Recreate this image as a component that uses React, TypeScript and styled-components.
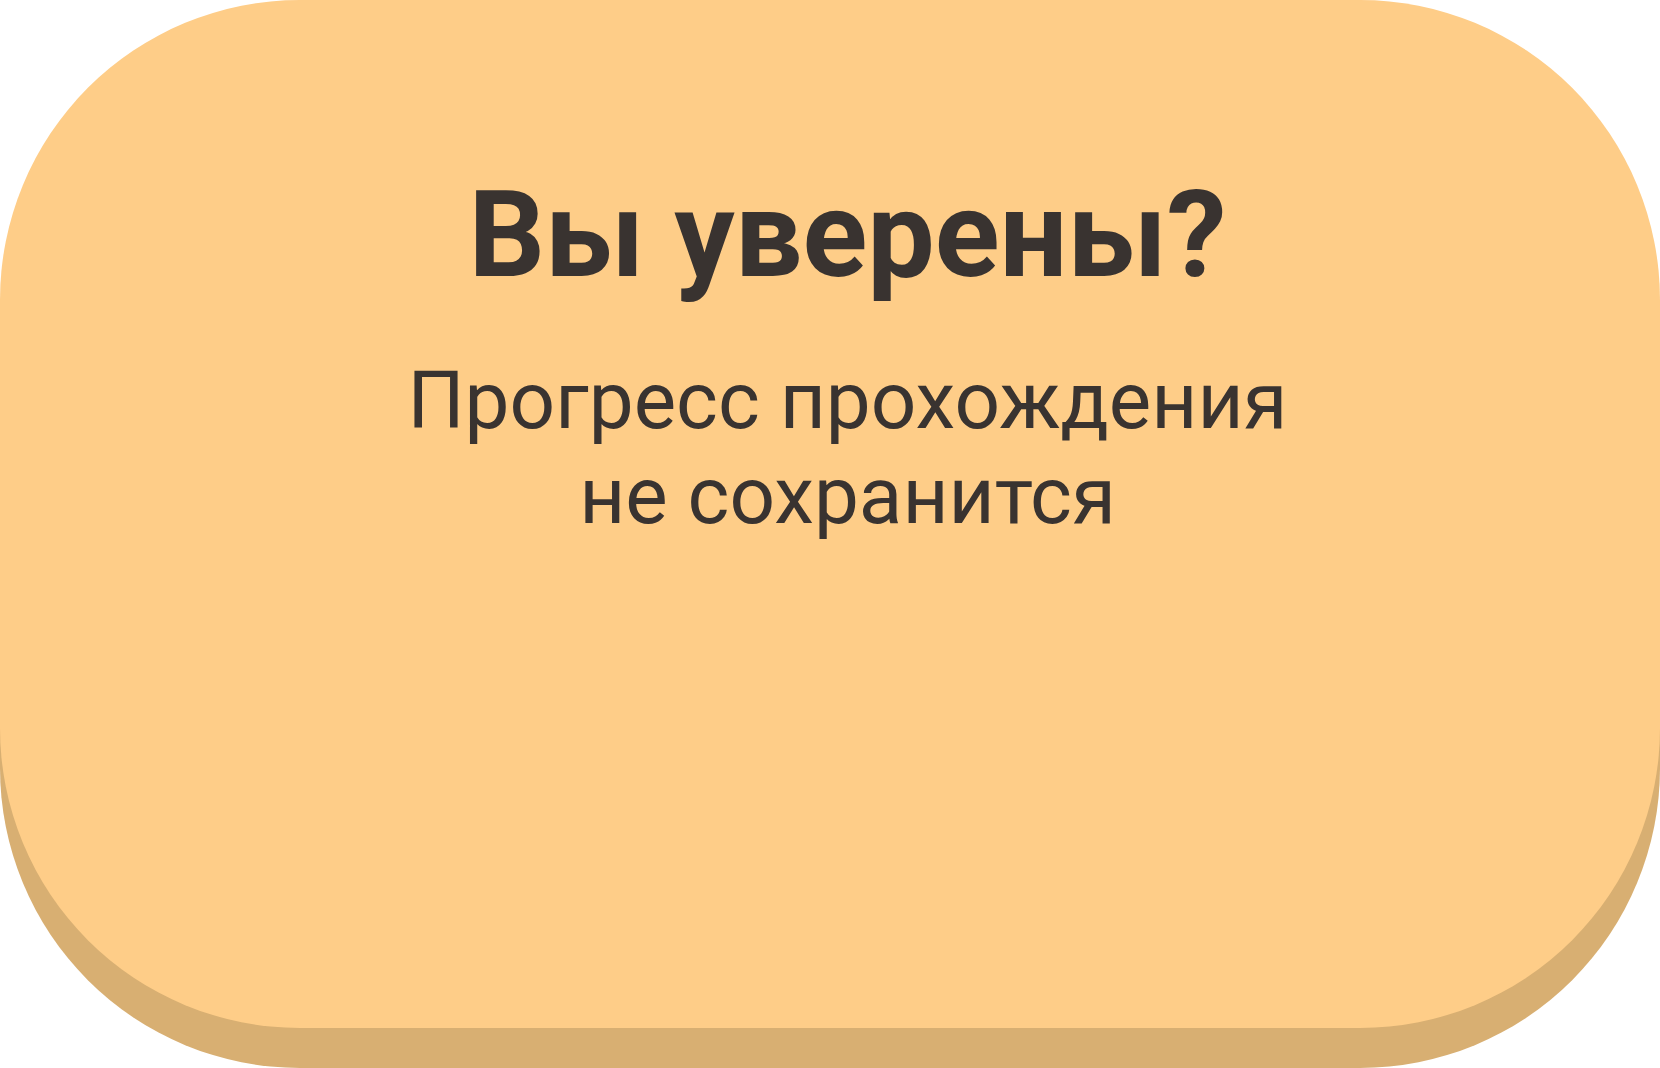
import React from "react";
import styled, { createGlobalStyle } from "styled-components";

const Global = createGlobalStyle`
  html, body {
    margin: 0;
    padding: 0;
    background: #ffffff;
  }
  body {
    font-family: Roboto, "Noto Sans", "Liberation Sans", sans-serif;
  }
`;

const Stage = styled.div`
  width: 1660px;
  height: 1068px;
  overflow: hidden;
`;

const Card = styled.section`
  box-sizing: border-box;
  width: 1660px;
  height: 1028px;
  background: #fecd88;
  border-radius: 300px;
  box-shadow: 0 40px 0 #d8af72;
  display: flex;
  flex-direction: column;
  align-items: center;
  padding: 163px 0 0 35px;
  color: #393330;
  text-align: center;
`;

const Title = styled.h1`
  margin: 0;
  font-family: Roboto, "Noto Sans", sans-serif;
  font-weight: 700;
  font-size: 120px;
  line-height: 144px;
`;

const Message = styled.p`
  margin: 47px 0 0;
  font-family: Roboto, "Noto Sans", sans-serif;
  font-weight: 400;
  font-size: 80px;
  line-height: 95px;
`;

export default function App() {
  return (
    <Stage>
      <Global />
      <Card>
        <Title>Вы уверены?</Title>
        <Message>
          Прогресс прохождения
          <br />
          не сохранится
        </Message>
      </Card>
    </Stage>
  );
}
